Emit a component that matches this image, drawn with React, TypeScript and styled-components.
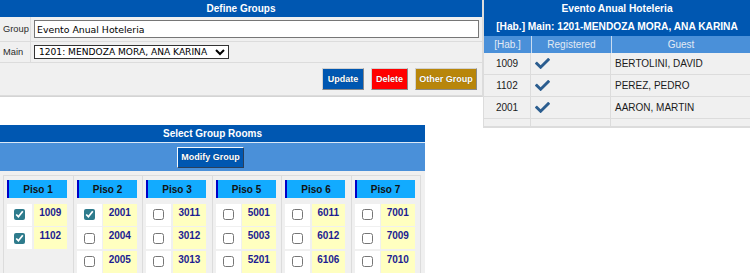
import React from "react";
import styled, {createGlobalStyle} from "styled-components";
import {FaCheck} from "react-icons/fa";

const GlobalStyle = createGlobalStyle`
	body {
		margin: 0;
		background: #fff;
		font-family: "Liberation Sans", Arial, sans-serif;
	}
`;

const DARK = "#0057b1";
const LIGHT = "#4a90d9";
const LINE = "#dcdcdc";

const Page = styled.div`
	display: flex;
	align-items: flex-start;
`;

const LeftColumn = styled.div`
	width: 483px;
	flex-shrink: 0;
`;

const Panel = styled.div<{width?: number}>`
	width: ${p => (p.width ? `${p.width}px` : "auto")};
	background: #f0f0f0;
`;

const Title = styled.div`
	background: ${DARK};
	color: #fff;
	font-weight: bold;
	font-size: 10px;
	height: 17px;
	line-height: 17px;
	text-align: center;
`;

const DefinePanel = styled(Panel)`
	border-right: 1px solid ${LINE};
	border-bottom: 1px solid #d4d4d4;
`;

const FormRow = styled.div<{height: number}>`
	display: flex;
	height: ${p => p.height}px;
	border-bottom: 1px solid ${LINE};
`;

const Label = styled.div`
	width: 31px;
	border-right: 1px solid ${LINE};
	display: flex;
	align-items: center;
	padding-left: 3px;
	box-sizing: border-box;
	font-size: 9.3px;
	color: #2a2a2a;
`;

const Field = styled.div`
	flex: 1;
	display: flex;
	align-items: center;
	padding: 0 3px 0 3px;
`;

const TextInput = styled.input`
	width: 100%;
	height: 18px;
	box-sizing: border-box;
	border: 1px solid #767676;
	padding: 0 2px;
	font-family: "DejaVu Sans", Verdana, sans-serif;
	font-size: 9.33px;
	color: #000;
	background: #fff;
	outline: none;
`;

const Select = styled.select`
	width: 195px;
	height: 14px;
	box-sizing: border-box;
	border: 1px solid #333;
	border-radius: 0;
	padding: 0;
	font-family: "DejaVu Sans", Verdana, sans-serif;
	font-size: 9.1px;
	color: #000;
	background: #fff;
`;

const ButtonRow = styled.div`
	height: 32px;
	display: flex;
	align-items: center;
	justify-content: flex-end;
	gap: 7px;
	padding-right: 5px;
	border-bottom: 1px solid ${LINE};
`;

const ActionButton = styled.button<{color: string; w: number}>`
	width: ${p => p.w}px;
	height: 22px;
	padding: 0;
	background: ${p => p.color};
	color: #fff;
	font-family: "Liberation Sans", Arial, sans-serif;
	font-weight: bold;
	font-size: 9px;
	border: 1px solid;
	border-color: #d0d0d0 #8a8a8a #8a8a8a #d0d0d0;
	text-shadow: 0 0 1px rgba(0, 0, 0, 0.4);
	cursor: pointer;
`;

const RoomsPanel = styled(Panel)`
	margin-top: 28px;
`;

const Toolbar = styled.div`
	background: ${LIGHT};
	border-top: 1px solid #dbe8f6;
	height: 28px;
	display: flex;
	align-items: center;
	justify-content: center;
`;

const ModifyButton = styled(ActionButton)`
	height: 21px;
	border-color: #f4f8fc #2a3f5a #2a3f5a #f4f8fc;
	margin-left: -4px;
`;

const RoomsBody = styled.div`
	padding: 4px 4px 0 3px;
`;

const FloorGrid = styled.div`
	display: flex;
	border: 1px solid ${LINE};
	border-bottom: none;
`;

const Floor = styled.div`
	flex: 1;
	padding: 4px 0 0 3px;
	& + & {
		border-left: 1px solid ${LINE};
	}
`;

const FloorTable = styled.div`
	width: 60px;
	display: grid;
	grid-template-columns: 25px 1fr;
	grid-auto-rows: 22px;
	gap: 1.5px;
`;

const FloorHead = styled.div`
	grid-column: 1 / span 2;
	height: 18px;
	background: #12abff;
	border-left: 2px solid #0000c8;
	font-weight: bold;
	font-size: 10px;
	color: #111;
	display: flex;
	align-items: center;
	justify-content: center;
`;

const CheckCell = styled.div`
	background: #fff;
	display: flex;
	align-items: center;
	justify-content: center;
`;

const Check = styled.input`
	width: 11px;
	height: 11px;
	margin: 0;
	accent-color: #2e7b8c;
`;

const RoomNo = styled.div`
	background: #ffffc0;
	color: #1c1c92;
	font-weight: bold;
	font-size: 10px;
	display: flex;
	justify-content: center;
	padding-top: 3px;
`;

const RightPanel = styled.div`
	width: 266px;
	background: #f0f0f0;
	border-left: 1px solid ${LINE};
	border-bottom: 1px solid ${LINE};
`;

const EventTitle = styled.div`
	background: ${DARK};
	color: #fff;
	font-weight: bold;
	font-size: 10.2px;
	padding: 0;
	text-align: center;
	line-height: 18px;
`;

const GuestGrid = styled.div`
	display: grid;
	grid-template-columns: 47px 80px 1fr;
`;

const HeadCell = styled.div`
	background: ${LIGHT};
	color: #e2eaf4;
	font-size: 10px;
	height: 17px;
	display: flex;
	align-items: center;
	justify-content: center;
	& + & {
		border-left: 1px solid #c9dcf1;
	}
`;

const Cell = styled.div<{align?: string}>`
	height: 21px;
	border-bottom: 1px solid ${LINE};
	border-right: 1px solid ${LINE};
	font-size: 10px;
	color: #1a1a1a;
	display: flex;
	align-items: center;
	justify-content: ${p => p.align || "flex-start"};
	padding-left: ${p => (p.align ? 0 : 4)}px;
	&:nth-child(3n) {
		border-right: none;
	}
`;

const EmptyCell = styled(Cell)`
	height: 7px;
`;

// the fourth row is cut off by the bottom edge, only the cell tops show
const floors = [
	{name: "Piso 1", rooms: [["1009", true], ["1102", true]]},
	{name: "Piso 2", rooms: [["2001", true], ["2004"], ["2005"], [""]]},
	{name: "Piso 3", rooms: [["3011"], ["3012"], ["3013"], [""]]},
	{name: "Piso 5", rooms: [["5001"], ["5003"], ["5201"], [""]]},
	{name: "Piso 6", rooms: [["6011"], ["6012"], ["6106"], [""]]},
	{name: "Piso 7", rooms: [["7001"], ["7009"], ["7010"], [""]]}
];

const guests = [
	["1009", "BERTOLINI, DAVID"],
	["1102", "PEREZ, PEDRO"],
	["2001", "AARON, MARTIN"]
];

export default function App() {
	return (
		<React.Fragment>
			<GlobalStyle />
			<Page>
				<LeftColumn>
					<DefinePanel>
						<Title>Define Groups</Title>
						<FormRow height={24}>
							<Label>Group</Label>
							<Field>
								<TextInput defaultValue="Evento Anual Hoteleria" />
							</Field>
						</FormRow>
						<FormRow height={20}>
							<Label>Main</Label>
							<Field>
								<Select defaultValue="1201">
									<option value="1201">1201: MENDOZA MORA, ANA KARINA</option>
								</Select>
							</Field>
						</FormRow>
						<ButtonRow>
							<ActionButton color={DARK} w={42}>Update</ActionButton>
							<ActionButton color="#ff0000" w={37}>Delete</ActionButton>
							<ActionButton color="#b8860b" w={62}>Other Group</ActionButton>
						</ButtonRow>
					</DefinePanel>
					<RoomsPanel width={425}>
						<Title>Select Group Rooms</Title>
						<Toolbar>
							<ModifyButton color={DARK} w={67}>Modify Group</ModifyButton>
						</Toolbar>
						<RoomsBody>
							<FloorGrid>
								{floors.map(f => (
									<Floor key={f.name}>
										<FloorTable>
											<FloorHead>{f.name}</FloorHead>
											{f.rooms.map(([no, on], i) => (
												<React.Fragment key={i}>
													<CheckCell>
														<Check type="checkbox" defaultChecked={!!on} />
													</CheckCell>
													<RoomNo>{no}</RoomNo>
												</React.Fragment>
											))}
										</FloorTable>
									</Floor>
								))}
							</FloorGrid>
						</RoomsBody>
					</RoomsPanel>
				</LeftColumn>
				<RightPanel>
					<EventTitle>
						Evento Anual Hoteleria
						<br />
						[Hab.] Main: 1201-MENDOZA MORA, ANA KARINA
					</EventTitle>
					<GuestGrid>
						<HeadCell>[Hab.]</HeadCell>
						<HeadCell>Registered</HeadCell>
						<HeadCell>Guest</HeadCell>
						{guests.map(([room, name]) => (
							<React.Fragment key={room}>
								<Cell align="center">{room}</Cell>
								<Cell>
									<FaCheck size={15} color="#2b5d8f" />
								</Cell>
								<Cell>{name}</Cell>
							</React.Fragment>
						))}
						<EmptyCell />
						<EmptyCell />
						<EmptyCell />
					</GuestGrid>
				</RightPanel>
			</Page>
		</React.Fragment>
	);
}
